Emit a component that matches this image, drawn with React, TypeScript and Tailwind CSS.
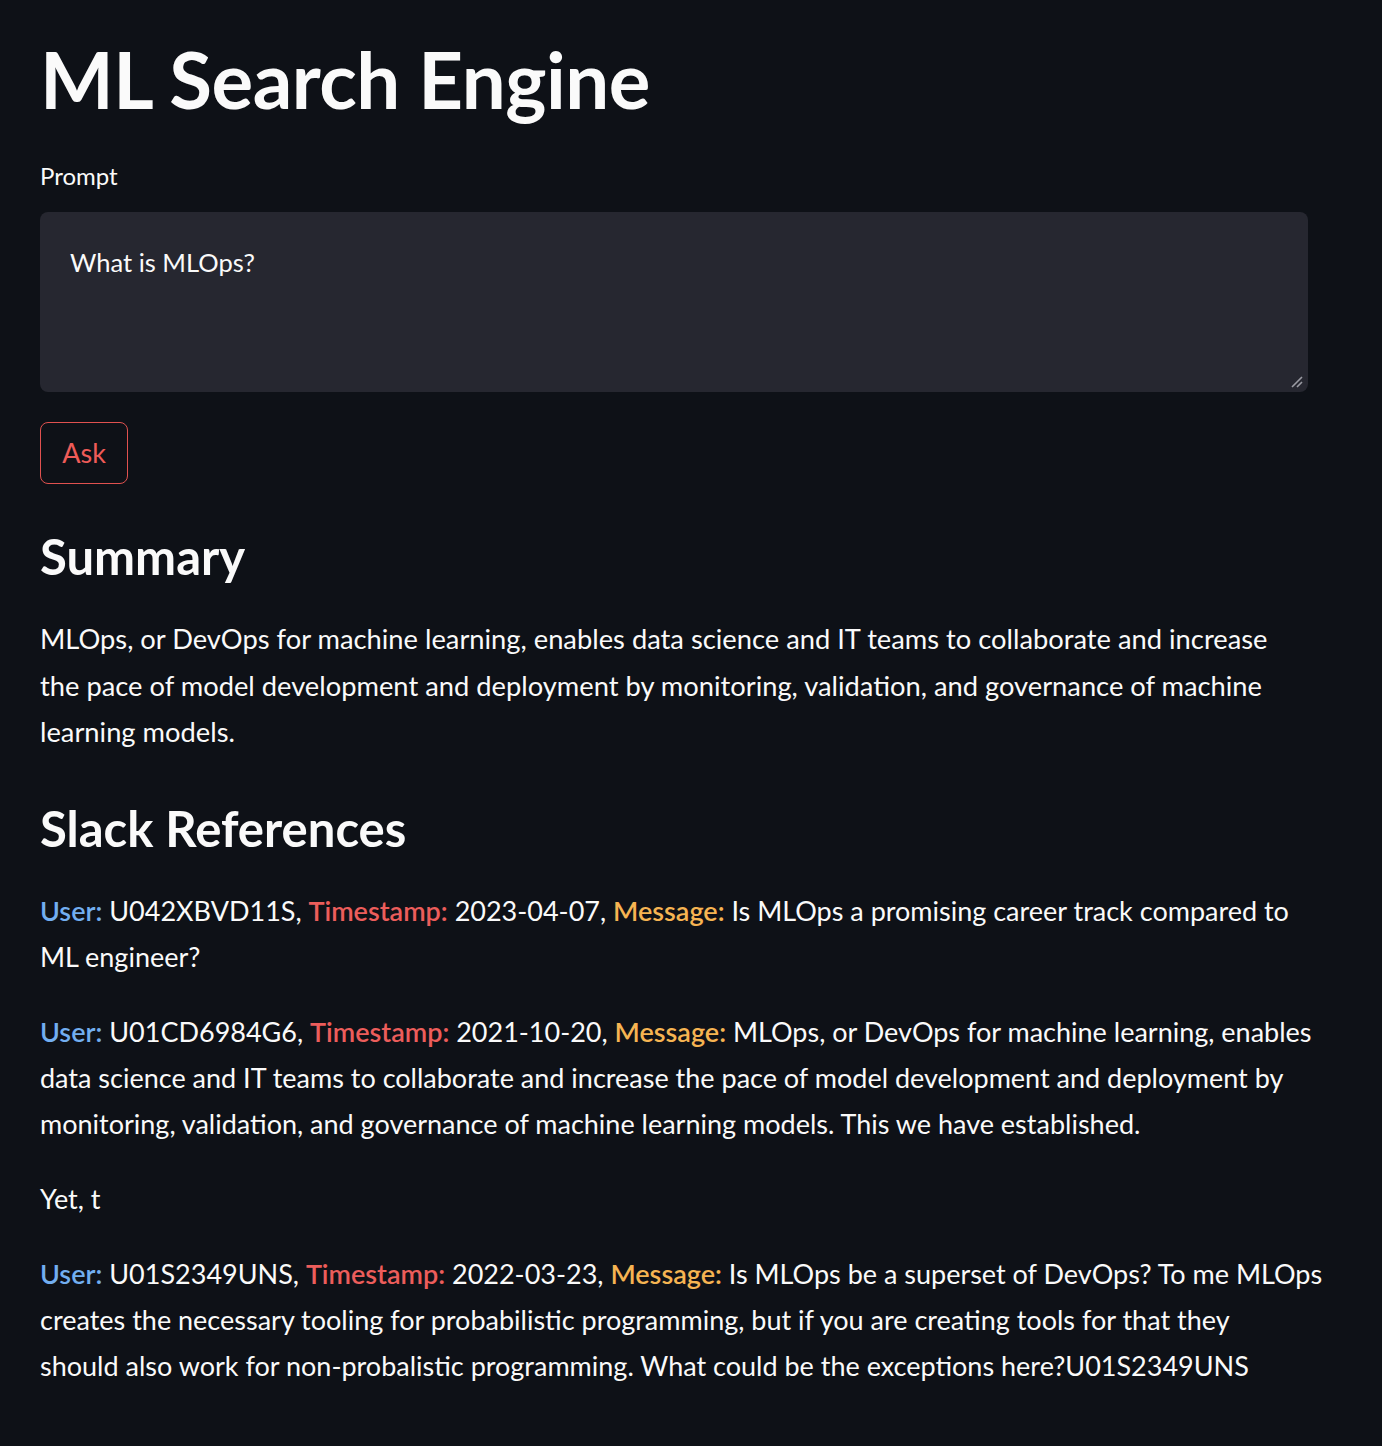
import React from "react";

const font = { fontFamily: "Lato, 'Noto Sans', sans-serif" };

function Ref({ user, ts, children }: { user: string; ts: string; children: React.ReactNode }) {
  return (
    <p className="mb-[29px] whitespace-nowrap">
      <span className="font-semibold text-[#72aef0]">User:</span> {user},{" "}
      <span className="font-semibold text-[#ec5d5b]">Timestamp:</span> {ts},{" "}
      <span className="font-semibold text-[#f6b452]">Message:</span> {children}
    </p>
  );
}

export default function App() {
  return (
    <div className="min-h-[1446px] w-full bg-[#0e1117] text-[#fafafa]" style={font}>
      <div className="w-[1268px] pl-[40px] pt-[33px] box-content">
        <h1 className="text-[78px] font-bold leading-[92px] tracking-[-0.5px]">ML Search Engine</h1>

        {/* prompt */}
        <label className="block mt-[36px] text-[24px] leading-[30px]">Prompt</label>
        <div className="relative mt-[21px] h-[180px] rounded-lg bg-[#262730] px-[30px] pt-[30px] text-[25.5px] leading-[40px]">
          What is MLOps?
          <svg className="absolute right-[5px] bottom-[4px]" width="12" height="12" viewBox="0 0 12 12">
            <path d="M1 11 L11 1 M6 11 L11 6" stroke="#9a9ba3" strokeWidth="1.6" />
          </svg>
        </div>
        <button className="mt-[30px] h-[62px] w-[88px] rounded-lg border border-[#e0514f] text-[27px] text-[#ee5b58]">
          Ask
        </button>

        <h3 className="mt-[42px] text-[49px] font-bold leading-[60px]">Summary</h3>
        <p className="mt-[30px] text-[27.3px] leading-[46.5px] whitespace-nowrap">
          MLOps, or DevOps for machine learning, enables data science and IT teams to collaborate and increase<br />
          the pace of model development and deployment by monitoring, validation, and governance of machine<br />
          learning models.
        </p>

        <h3 className="mt-[42px] text-[49px] font-bold leading-[60px]">Slack References</h3>
        <div className="mt-[30px] text-[27px] leading-[46px]">
          <Ref user="U042XBVD11S" ts="2023-04-07">
            Is MLOps a promising career track compared to<br />ML engineer?
          </Ref>
          <Ref user="U01CD6984G6" ts="2021-10-20">
            MLOps, or DevOps for machine learning, enables<br />
            data science and IT teams to collaborate and increase the pace of model development and deployment by<br />
            monitoring, validation, and governance of machine learning models. This we have established.
          </Ref>
          <p className="mb-[29px]">Yet, t</p>
          <Ref user="U01S2349UNS" ts="2022-03-23">
            Is MLOps be a superset of DevOps? To me MLOps<br />
            creates the necessary tooling for probabilistic programming, but if you are creating tools for that they<br />
            should also work for non-probalistic programming. What could be the exceptions here?U01S2349UNS
          </Ref>
        </div>
      </div>
    </div>
  );
}
